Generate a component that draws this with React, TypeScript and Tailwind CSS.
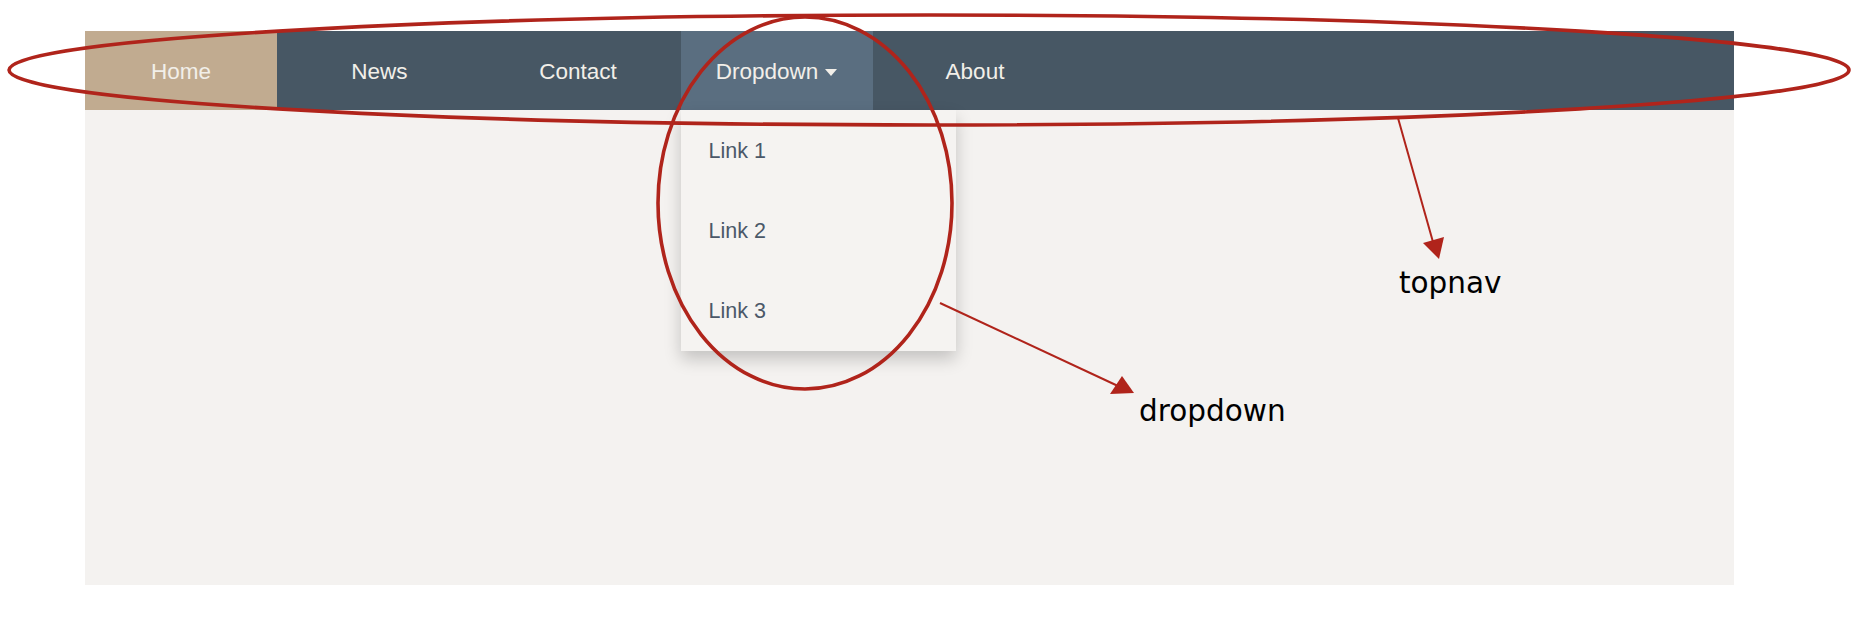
import { useState } from 'react';

const navItems = ['Home', 'News', 'Contact', 'Dropdown', 'About'];
const links = ['Link 1', 'Link 2', 'Link 3'];

function Caret() {
  return (
    <svg width="12" height="7" viewBox="0 0 12 7" className="ml-[7px] mt-[1px]">
      <path d="M0 0 L12 0 L6 7 Z" fill="#f2efe9" />
    </svg>
  );
}

function TopNav() {
  const [active] = useState('Home');

  return (
    <nav className="flex h-[79px] gap-[6.5px] bg-[#475764] text-[22.5px] text-[#f2efe9] font-['Liberation_Sans',Arial,sans-serif]">
      {navItems.map((item) => {
        if (item === 'Dropdown') {
          return (
            <div key={item} className="relative flex w-[192px] items-center justify-center bg-[#5a6e80] pt-[3px]">
              <span>{item}</span>
              <Caret />
              <div className="absolute left-0 top-full z-10 w-[275px] bg-[#f5f3f1] pt-[1px] shadow-[0_8px_16px_0_rgba(0,0,0,0.2)]">
                {links.map((link) => (
                  <a key={link} className="flex h-[80px] items-center px-[28px] text-[21.5px] text-[#4b5868]">
                    {link}
                  </a>
                ))}
              </div>
            </div>
          );
        }
        return (
          <a
            key={item}
            className={`flex w-[192px] items-center justify-center pt-[3px] ${item === active ? 'bg-[#c1ab90]' : ''}`}
          >
            {item}
          </a>
        );
      })}
    </nav>
  );
}

// Red hand-drawn style markup that sits on top of the screenshot
function Annotations() {
  return (
    <>
      <svg className="pointer-events-none absolute inset-0 z-20" width="1864" height="618" viewBox="0 0 1864 618">
        <g fill="none" stroke="#b0241b">
          <ellipse cx="929" cy="70" rx="920" ry="55" strokeWidth="3.6" />
          <ellipse cx="805" cy="203" rx="147" ry="186" strokeWidth="3.6" />
          <line x1="1398" y1="118" x2="1433" y2="242" strokeWidth="2" />
          <line x1="940" y1="303" x2="1118" y2="386" strokeWidth="2" />
        </g>
        <g fill="#b0241b">
          <path d="M1423 243 L1444 237 L1439 259 Z" />
          <path d="M1110 394 L1122 376 L1134 393 Z" />
        </g>
      </svg>
      <div className="pointer-events-none absolute left-[1399px] top-[269px] z-20 text-[29.5px] leading-none text-black font-['DejaVu_Sans',Verdana,sans-serif]">
        topnav
      </div>
      <div className="pointer-events-none absolute left-[1139px] top-[397px] z-20 text-[29.5px] leading-none text-black font-['DejaVu_Sans',Verdana,sans-serif]">
        dropdown
      </div>
    </>
  );
}

export default function App() {
  return (
    <div className="relative h-[618px] w-[1864px] overflow-hidden bg-white pl-[85px] pt-[31px]">
      <div className="h-[554px] w-[1649px] bg-[#f4f2f0]">
        <TopNav />
      </div>
      <Annotations />
    </div>
  );
}
